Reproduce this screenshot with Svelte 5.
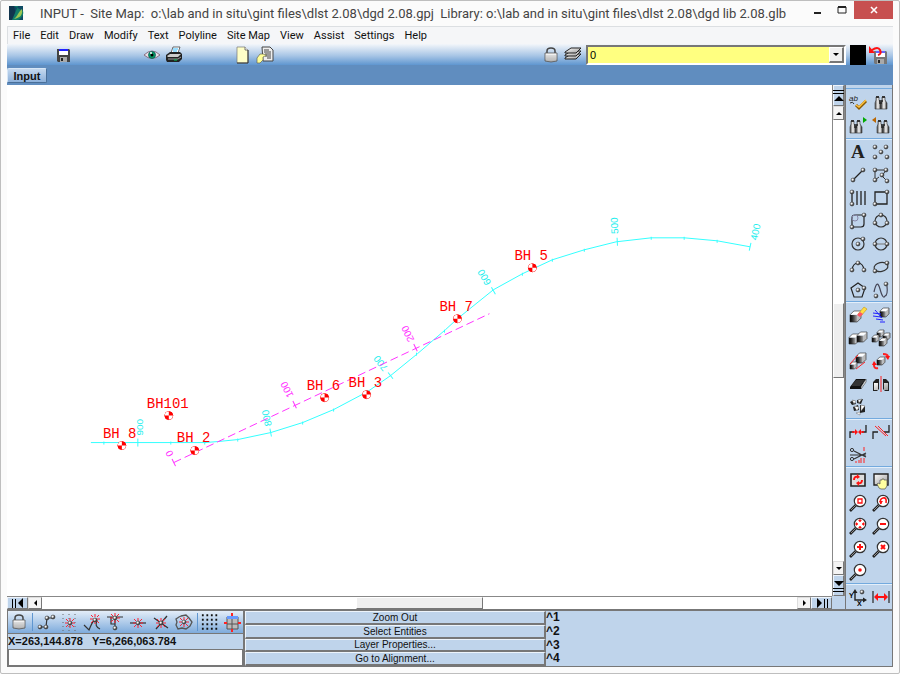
<script>
	const menus = ["File", "Edit", "Draw", "Modify", "Text", "Polyline", "Site Map", "View", "Assist", "Settings", "Help"];
	const commands = ["Zoom Out", "Select Entities", "Layer Properties...", "Go to Alignment..."];

	const paletteGroups = [
		["spell", "find", "findNext", "findPrev"],
		["text", "points", "line", "polyline", "hatch", "rect", "roundRect", "circle3", "circle", "circle2", "arc", "ellipse", "polygon", "spline"],
		["erase", "move", "copy", "array", "scale", "rotate", "skew", "mirror", "explode"],
		["join", "offset", "trim"],
		["redraw", "pan", "zoomWindow", "zoomPrev", "zoomExtents", "zoomOut", "zoomIn", "zoomClear", "zoomCenter"],
		["axes", "distance"]
	];
	const snaps = ["snapEnd", "snapGrid", "snapNear", "snapPerp", "snapMid", "snapCross", "snapArea"];

	// main alignment, chainage 400 (right) to 900 (left)
	const alignment = "90,443 204,443 217,442 237,440 270,433 302,423 333,410 367,392 390,376 417,354 445,330 457,319 493,290 522,274 552,260 584,250 616,242 651,238 684,238 717,241 750,247";
	const minorTicks = [[103, 443], [170, 443], [204, 443], [237, 440], [302, 423], [333, 410], [367, 392], [416, 354], [444, 331], [522, 274], [552, 260], [584, 250], [651, 238], [684, 238], [717, 241]];
	const stations = [
		{ label: "400", x: 750, y: 247, tx: 757, ty: 241, angle: -78 },
		{ label: "500", x: 617, y: 242, tx: 618, ty: 234, angle: -93 },
		{ label: "600", x: 493, y: 291, tx: 491, ty: 283, angle: -120 },
		{ label: "700", x: 390, y: 376, tx: 388, ty: 368, angle: -128 },
		{ label: "800", x: 270, y: 433, tx: 271, ty: 426, angle: -101 },
		{ label: "900", x: 137, y: 443, tx: 142, ty: 436, angle: -90 }
	];
	const crossStations = [
		{ label: "0", x: 173, y: 463, tx: 173, ty: 455, angle: -116 },
		{ label: "100", x: 294, y: 405, tx: 293, ty: 396, angle: -116 },
		{ label: "200", x: 415, y: 348, tx: 414, ty: 340, angle: -116 }
	];
	const boreholes = [
		{ name: "BH 8", x: 121, y: 446, tx: 102, ty: 438 },
		{ name: "BH101", x: 168, y: 416, tx: 146, ty: 408 },
		{ name: "BH 2", x: 194, y: 451, tx: 176, ty: 442 },
		{ name: "BH 6", x: 324, y: 398, tx: 306, ty: 390 },
		{ name: "BH 3", x: 366, y: 395, tx: 348, ty: 387 },
		{ name: "BH 7", x: 457, y: 319, tx: 439, ty: 311 },
		{ name: "BH 5", x: 532, y: 268, tx: 514, ty: 260 }
	];

	// small pieces that many icons share
	const ball = (x, y) => `<circle cx="${x}" cy="${y}" r="2" fill="url(#ball)" stroke="#444" stroke-width=".6"/>`;
	const balls = (...points) => points.map(([x, y]) => ball(x, y)).join("");
	const cube = (x, y, s) => {
		const top = s * 0.35;
		const side = s * 0.65;
		return `<path d="M${x} ${y + top}h${side}v${side}h${-side}z" fill="url(#cube)"/><path d="M${x + side} ${y + top}l${top} ${-top}v${side}l${-top} ${top}z" fill="#bbb"/><path d="M${x} ${y + top}l${top} ${-top}h${side}l${-top} ${top}z" fill="#fff"/><path d="M${x} ${y + top}l${top} ${-top}h${side}v${side}l${-top} ${top}h${-side}z" fill="none" stroke="#222" stroke-width=".6"/>`;
	};
	const stroke = (d, color = "#333", width = 1) => `<path d="${d}" fill="none" stroke="${color}" stroke-width="${width}"/>`;
	const barrel = (x) => `<path d="M${x + 1} 4h3v3l2 3v6h-6v-6l1-3z" fill="url(#barrel)" stroke="#333" stroke-width=".6"/><path d="M${x + 1} 3h3v2h-3z" fill="#333"/>`;
	const binoculars = barrel(3) + barrel(9) + stroke("M7 8h4M7 10h3", "#222", 1.5);
	const lens = (inner) => `<path d="M1 17l6-6" stroke="#222" stroke-width="2.6"/><path d="M2 16l5-5" stroke="#aaa" stroke-width=".8"/><circle cx="11" cy="7" r="5.7" fill="#fff" stroke="#333" stroke-width="1.2"/>${inner}`;
	const burst = (x, y) => stroke(`M${x - 5} ${y}h3M${x + 2} ${y}h3M${x} ${y - 5}v3M${x} ${y + 2}v3M${x - 4} ${y - 4}l2 2M${x + 2} ${y + 2}l2 2M${x + 4} ${y - 4}l-2 2M${x - 2} ${y + 2}l-2 2`, "#f23", 1);
	const floppy = (shell, label) => `<path d="M3 3h12l1 1v12H4l-1-1z" fill="${shell}"/><path d="M5 3h9v6H5z" fill="#fff"/><path d="M5 3h9v2H5z" fill="${label}"/><path d="M6 11h7v5H6z" fill="#aaa"/><path d="M7 12h2v3H7z" fill="#222"/>`;
	const paper = (x) => `<path d="M${x} 1h8l3 3v13h-11z" fill="#ffffc8" stroke="#777" stroke-width=".7"/><path d="M${x + 8} 1v3h3" fill="#fff" stroke="#555" stroke-width=".8"/><path d="M${x} 17h11V4" fill="none" stroke="#333"/>`;
	const hand = `<path d="M6 16l-2-4 1-1 2 1V8h2v-1h2v1h3v6l-2 3H8z" fill="#ffffa0" stroke="#555" stroke-width=".7"/>`;

	const icons = {
		logo: `<rect x="2" y="2" width="14" height="14" fill="#0e4b64"/><path d="M2 2h5l3 14H2z" fill="#12354e"/><path d="M7 2h4L5 16h6c4-2 6-6 5-9z" fill="#117d68"/><path d="M15 5c1 6-2 9-8 10 4-3 4-7 8-10z" fill="#9cc653"/>`,
		save: floppy("#444", "#22f"),
		eye: `<path d="M1 9Q9 1 17 9 9 16 1 9z" fill="#e8e0e8" stroke="#886f82"/><circle cx="9" cy="9" r="3.500" fill="#0a9b65" stroke="#055" stroke-width=".7"/><circle cx="9" cy="9" r="1.500"/><circle cx="8" cy="7" r="1" fill="#fff"/>`,
		print: `<path d="M6 7l2-6h7l-2 6z" fill="#fff" stroke="#333" stroke-width=".7"/><path d="M8 3h5M8 5h4" stroke="#3bf"/><path d="M1 9l4-3h10l2 2v5l-3 3H2l-1-2z" fill="#222"/><path d="M2 10l3-2h11l-3 3H3z" fill="#ccc"/><path d="M3 13h10l3-2" fill="none" stroke="#999"/><path d="M9 14h3" stroke="#0c5"/>`,
		page: paper(3),
		pageHand: `<path d="M6 1h8l3 3v11H7z" fill="#eee" stroke="#444"/><path d="M8 4h5M8 6h7M9 8h6M9 10h6M11 12h4" stroke="#444"/><path d="M1 17V12l3-4h3l4 1-4 2v3l-3 3z" fill="#ff9" stroke="#665" stroke-width=".7"/>`,
		lock: `<path d="M5 8V5q0-3 4-3t4 3v3" fill="none" stroke="#444" stroke-width="1.5"/><path d="M3 7h12v8q-6 2-12 0V7z" fill="url(#lock)" stroke="#555" stroke-width=".8"/><path d="M3 10h12M3 12h12" stroke="#bbb" stroke-width=".6"/>`,
		layers: ["12", "9", "6"].map((y) => `<path d="M1 ${y}l6-4h10l-5 5H1z" fill="url(#metal)" stroke="#222"/>`).join(""),
		undoSave: `<g transform="translate(2 2)">${floppy("#777", "#66f")}</g><path d="M3 4q6-4 8 0t-2 5" fill="none" stroke="#f11" stroke-width="2"/><path d="M0 0v7h6z" fill="#f11"/>`,

		spell: `<text x="0" y="8" font-family="Liberation Sans" font-size="8" font-style="italic" fill="#222">ab</text>` + stroke("M5 11q-1-3-4-1") + `<path d="M7 12l3 3 7-7" fill="none" stroke="#8a5a00" stroke-width="3"/><path d="M7 12l3 2 7-7" fill="none" stroke="#ffc23d" stroke-width="1.5"/>`,
		find: binoculars,
		findNext: `<g transform="translate(-2 1)">${binoculars}</g><path d="M14 1v6l4-3z" fill="#0a0"/>`,
		findPrev: `<g transform="translate(2 1)">${binoculars}</g><path d="M4 1v6L0 4z" fill="#b60"/>`,
		text: `<text x="2" y="15" font-family="Liberation Serif" font-size="19" font-weight="bold" fill="#222">A</text>`,
		points: balls([3, 4], [14, 4], [9, 9], [3, 14], [15, 14]),
		line: stroke("M4 14L14 4", "#222", 1.3) + balls([4, 14], [14, 4]),
		polyline: stroke("M3 4h11l-4 6 5 5M3 4v10l4-3") + balls([3, 4], [14, 4], [10, 9], [3, 14], [15, 15]),
		hatch: stroke("M3 3v12M8 2v14M12 2v14M16 2v14", "#222", 1.3) + balls([3, 3], [3, 15]),
		rect: stroke("M3 3h12v12H3z", "#222", 1.3) + balls([15, 3], [3, 15]),
		roundRect: stroke("M6 3h9v9q0 3-3 3H3V6q0-3 3-3z", "#222", 1.2) + `<circle cx="6" cy="6" r="3" fill="none" stroke="#88a"/>` + balls([15, 3], [3, 15]),
		circle3: `<circle cx="9" cy="9" r="6" fill="none" stroke="#333" stroke-width="1.2"/>` + balls([9, 3], [3, 11], [15, 11]),
		circle: `<circle cx="9" cy="9" r="6" fill="none" stroke="#333" stroke-width="1.2"/>` + balls([9, 9], [14, 4]),
		circle2: `<circle cx="9" cy="9" r="6" fill="none" stroke="#333" stroke-width="1.2"/>` + stroke("M3 9h12", "#777") + balls([3, 9], [15, 9]),
		arc: stroke("M3 12q1-7 6-7t6 7", "#222", 1.2) + balls([3, 12], [9, 5], [15, 12]),
		ellipse: `<ellipse cx="9" cy="9" rx="7" ry="4.500" fill="none" stroke="#333" stroke-width="1.2" transform="rotate(-12 9 9)"/>` + balls([3, 13], [15, 5]),
		polygon: stroke("M9 2l7 5-3 9H5L2 7z", "#222", 1.2) + balls([9, 9], [15, 7]),
		spline: stroke("M2 11Q5-3 8 8t5 7q3-1 2-10", "#445", 1.2) + balls([14, 3], [4, 15]),
		erase: cube(1, 5, 11) + `<path d="M9 8l6-7 3 2-6 7z" fill="#fd4" stroke="#b80" stroke-width=".5"/><path d="M8 9l3-3 3 2-3 3z" fill="#f56"/>`,
		move: cube(8, 2, 9) + stroke("M1 7l8 1M1 10l8 1M4 13l7 1M8 16h5", "#22f", 1) + stroke("M3 4l7 8", "#22f", 1),
		copy: cube(0, 5, 10) + cube(8, 3, 10),
		array: cube(5, 1, 7) + cube(11, 4, 7) + cube(0, 6, 7) + cube(7, 9, 8),
		scale: cube(7, 1, 10) + cube(1, 10, 7) + stroke("M1 12L9 3M7 17l9-7", "#f22", 1),
		rotate: cube(5, 5, 8) + stroke("M11 2q5 0 5 3M6 16q-4 1-4-3", "#f22", 2) + `<path d="M13 4h5l-2 4zM0 13h5l-3-4z" fill="#f11"/>`,
		skew: `<path d="M1 12l6-8h10l-5 8v2H1z" fill="#111"/><path d="M2 11l5-6h9l-5 6z" fill="#333"/><path d="M12 12l5-8v3l-5 7z" fill="#eee" stroke="#222" stroke-width=".5"/>`,
		mirror: `<path d="M1 7l3-3h3v10l-2 2H1zM17 7l-3-3h-3v10l2 2h4z" fill="#222"/><path d="M2 8h4v7H2zM12 8h4v7h-4z" fill="url(#metal)"/>` + stroke("M9 1v16", "#f22", 1),
		explode: `<path d="M1 4l4-2 2 4-4 1zM8 2l6-1-2 5-4-1zM4 9l5-2 1 5-5 1zM11 7l5 1v6l-5 1z" fill="#222"/><path d="M3 2l4 1-2 3zM9 2l4-1-3 4zM5 8l5 1-2 4zM12 7l4 1-4 5zM7 15l4-1v3z" fill="#fff" stroke="#555" stroke-width=".4"/>`,
		join: stroke("M1 15V9h4M17 2v7h-4", "#222", 1.3) + stroke("M3 9h4M11 9h4", "#f11", 1.5) + `<path d="M6 6v6l3-3zM12 6v6L9 9z" fill="#f11"/>`,
		offset: stroke("M1 16V9h5M12 9h5V2", "#222", 1.3) + stroke("M3 3l11 10M6 3l10 10", "#f22", 1),
		trim: stroke("M5 5l12 6M5 13l12-6M1 9h16", "#333", 1.2) + `<circle cx="3" cy="4" r="1.6" fill="none" stroke="#333"/><circle cx="3" cy="13" r="1.6" fill="none" stroke="#333"/>` + stroke("M7 15v2M10 14v3M12 12v5M15 1v4M15 12v5", "#f22", 1),
		redraw: `<path d="M2 3h14v12H2z" fill="#ddd" stroke="#222" stroke-width="1.6"/>` + stroke("M5 9q0-4 4-3M13 9q0 4-4 3", "#f11", 2) + `<path d="M8 3v5l3-2zM10 10v5l-3-3z" fill="#f11"/>`,
		pan: `<path d="M2 3h14v11H2z" fill="url(#metal)" stroke="#222" stroke-width="1.4"/><g transform="translate(1 1)">${hand}</g>`,
		zoomWindow: lens(stroke("M9 5h4v4H9z", "#f11", 1.3)),
		zoomPrev: lens(stroke("M9 10q-2-5 2-6t3 5", "#f11", 1.6) + `<path d="M7 7h4l-2 3z" fill="#f11"/>`),
		zoomExtents: lens(`<path d="M11 2l2 2H9zM11 12l2-2H9zM6 7l2-2v4zM16 7l-2-2v4z" fill="#f11"/>` + stroke("M11 3v2M11 9v2M7 7h2M13 7h2", "#f11", 1.5)),
		zoomOut: lens(stroke("M8 7h6", "#f11", 2)),
		zoomIn: lens(stroke("M8 7h6M11 4v6", "#f11", 2)),
		zoomClear: lens(stroke("M9 5l4 4M13 5l-4 4", "#f11", 2)),
		zoomCenter: lens(`<circle cx="11" cy="7" r="1.800" fill="#f11"/>`),
		axes: stroke("M6 4v8h10", "#222", 1.4) + `<path d="M3.500 5L6 1l2.500 4zM14 9.500l4 2.500-4 2.500z" fill="#222"/><text x="0" y="10" font-family="Liberation Sans" font-size="7" font-weight="bold">Y</text><text x="8" y="18" font-family="Liberation Sans" font-size="7" font-weight="bold">X</text>` + ball(13, 4),
		distance: stroke("M1 3v12M17 3v12", "#333", 1.3) + stroke("M4 9h10", "#f11", 2) + `<path d="M2 9l4-4v8zM16 9l-4-4v8z" fill="#f11"/>`,

		snapEnd: stroke("M3 14h6l1-9h5", "#333", 1.2) + balls([3, 14], [9, 14], [10, 5], [16, 4]),
		snapGrid: `<path d="M3 1v17M9 1v17M15 1v17" stroke="#666" stroke-dasharray="1 3"/>` + burst(10, 10) + ball(10, 10),
		snapNear: stroke("M1 12l5 5q6-15 8-9-3 5 3 8", "#333", 1.2) + burst(12, 6) + ball(12, 7),
		snapPerp: stroke("M1 4h16M9 4v10M5 4v7h4", "#333", 1.2) + burst(9, 5) + balls([9, 5], [9, 15]),
		snapMid: stroke("M1 10h16", "#333", 1.2) + burst(9, 10) + ball(9, 10),
		snapCross: stroke("M2 5l14 10M15 3L4 16", "#333", 1.3) + burst(9, 10) + ball(9, 10),
		snapArea: stroke("M6 3l5-1 3 3 3 4-2 4-4 3-4-1-4 1-2-4 1-3-1-3 3-2z", "#555", 1.3) + burst(9, 9) + ball(9, 9),
		dots: `<path d="M1 2.500h19M1 7.500h19M1 12.500h19M1 17.500h19" stroke="#111" stroke-width="2" stroke-dasharray="2 3"/>`,
		sheet: `<path d="M4 4h11v12H4z" fill="#bbb" stroke="#555"/><path d="M4 3h11v3H4z" fill="#69f"/><path d="M4 11h11M9 6v10" stroke="#555"/>` + stroke("M1 10h3M15 10h3M9 0v3M9 16v3", "#f22", 2)
	};
</script>

{#snippet icon(name, cls = "")}
	<svg class="icon {cls}" viewBox="0 0 18 18" aria-hidden="true">{@html icons[name]}</svg>
{/snippet}

{#snippet arrow(d)}
	<svg class="arrow" viewBox="0 0 12 12" aria-hidden="true"><path {d} /></svg>
{/snippet}

<svg class="defs" aria-hidden="true">
	<defs>
		<radialGradient id="ball" cx="35%" cy="35%">
			<stop offset="0" stop-color="#fff" />
			<stop offset=".5" stop-color="#ccc" />
			<stop offset="1" stop-color="#333" />
		</radialGradient>
		<linearGradient id="metal" x2="1" y2="1">
			<stop offset="0" stop-color="#fff" />
			<stop offset="1" stop-color="#999" />
		</linearGradient>
		<linearGradient id="cube" x2="1" y2="0">
			<stop offset="0" stop-color="#000" />
			<stop offset=".4" stop-color="#333" />
			<stop offset="1" stop-color="#aaa" />
		</linearGradient>
		<linearGradient id="barrel">
			<stop offset="0" stop-color="#444" />
			<stop offset=".5" stop-color="#fff" />
			<stop offset="1" stop-color="#222" />
		</linearGradient>
		<linearGradient id="lock" x2="0" y2="1">
			<stop offset="0" stop-color="#fff" />
			<stop offset="1" stop-color="#aaa" />
		</linearGradient>
	</defs>
</svg>

<div class="window">
	<header class="titleBar">
		{@render icon("logo", "logo")}
		<h1>INPUT -&nbsp; Site Map:&nbsp; o:\lab and in situ\gint files\dlst 2.08\dgd 2.08.gpj&nbsp; Library: o:\lab and in situ\gint files\dlst 2.08\dgd lib 2.08.glb</h1>
		<div class="windowButtons">
			<button aria-label="Minimize"><svg viewBox="0 0 10 10"><path d="M1 8h7" stroke="#222" stroke-width="2" /></svg></button>
			<button aria-label="Maximize"><svg viewBox="0 0 10 10"><path d="M1 2h8v6H1z" fill="none" stroke="#222" /><path d="M1 2h8" stroke="#222" stroke-width="2" /></svg></button>
			<button aria-label="Close" class="close"><svg viewBox="0 0 10 10"><path d="M2 2l6 6M8 2l-6 6" stroke="#fff" stroke-width="1.6" /></svg></button>
		</div>
	</header>

	<nav class="menuBar">
		{#each menus as menu}
			<button>{menu}</button>
		{/each}
	</nav>

	<div class="toolBar">
		<div class="toolGroup first"><button aria-label="Save">{@render icon("save")}</button></div>
		<div class="toolGroup second">
			<button aria-label="Preview">{@render icon("eye")}</button>
			<button aria-label="Print">{@render icon("print")}</button>
		</div>
		<div class="toolGroup third">
			<button aria-label="New">{@render icon("page")}</button>
			<button aria-label="Properties">{@render icon("pageHand")}</button>
		</div>
		<div class="toolGroup last">
			<button aria-label="Lock layer">{@render icon("lock")}</button>
			<button aria-label="Layers">{@render icon("layers")}</button>
		</div>
		<div class="combo">
			<select aria-label="Current layer"><option>0</option></select>
			<span class="comboArrow">{@render arrow("M3 5h6L6 8z")}</span>
		</div>
		<button class="swatch" aria-label="Layer color"></button>
		<button aria-label="Revert">{@render icon("undoSave")}</button>
	</div>

	<div class="tabs"><button class="tab">Input</button></div>

	<main>
		<svg class="map" viewBox="6 85 826 511" preserveAspectRatio="xMinYMin meet" role="img" aria-label="Site map">
			<g class="main">
				<polyline points={alignment} />
				{#each minorTicks as [x, y]}
					<path d="M{x} {y - 1}v3" />
				{/each}
				{#each stations as s}
					<path d="M-4 0h8" transform="translate({s.x} {s.y}) rotate({s.angle})" />
					<text transform="translate({s.tx} {s.ty}) rotate({s.angle})">{s.label}</text>
				{/each}
			</g>
			<g class="cross">
				<path class="dashed" d="M173 463L489 314" />
				{#each crossStations as s}
					<path d="M-4 0h8" transform="translate({s.x} {s.y}) rotate({s.angle})" />
					<text transform="translate({s.tx} {s.ty}) rotate({s.angle})">{s.label}</text>
				{/each}
			</g>
			{#each boreholes as b}
				<g class="borehole">
					<circle cx={b.x} cy={b.y} r="4" />
					<path d="M{b.x} {b.y}v-4a4 4 0 0 0-4 4zM{b.x} {b.y}v4a4 4 0 0 0 4-4z" />
					<text x={b.tx} y={b.ty}>{b.name}</text>
				</g>
			{/each}
		</svg>

		<div class="scroll vertical">
			<button class="jump" aria-label="Top">{@render arrow("M0 0h12v1H0zM0 3h12v1H0zM1 11h10L6 6z")}</button>
			<button class="step" aria-label="Up">{@render arrow("M3 8h6L6 5z")}</button>
			<div class="track"><span class="thumb"></span></div>
			<button class="step" aria-label="Down">{@render arrow("M3 5h6L6 8z")}</button>
			<button class="jump" aria-label="Bottom">{@render arrow("M1 1h10L6 6zM0 8h12v1H0zM0 11h12v1H0z")}</button>
		</div>
		<div class="scroll horizontal">
			<button class="jump" aria-label="Far left">{@render arrow("M0 2h1v9H0zM3 2h1v9H3zM11 1v10L6 6z")}</button>
			<button class="step" aria-label="Left">{@render arrow("M8 3v6L5 6z")}</button>
			<div class="track"><span class="thumb"></span></div>
			<button class="step" aria-label="Right">{@render arrow("M5 3v6l3-3z")}</button>
			<button class="jump" aria-label="Far right">{@render arrow("M1 1v10l5-5zM8 2h1v9H8zM11 2h1v9h-1z")}</button>
		</div>

		<aside class="palette">
			{#each paletteGroups as group}
				<div class="paletteGroup">
					{#each group as name}
						<button aria-label={name}>{@render icon(name)}</button>
					{/each}
				</div>
			{/each}
		</aside>
	</main>

	<footer>
		<div class="status">
			<div class="snapBar">
				<button class="snapLock" aria-label="Lock">{@render icon("lock")}</button>
				<div class="snaps">
					{#each snaps as name}
						<button aria-label={name}>{@render icon(name)}</button>
					{/each}
				</div>
				<button aria-label="Grid" class="gridButton"><svg class="icon" viewBox="0 0 20 20">{@html icons.dots}</svg></button>
				<button aria-label="Sheet">{@render icon("sheet")}</button>
			</div>
			<p class="coords">X=263,144.878   Y=6,266,063.784</p>
			<input type="text" aria-label="Command" />
		</div>
		<div class="commands">
			{#each commands as command}
				<button>{command}</button>
			{/each}
		</div>
		<div class="shortcuts">
			{#each commands as _, i}
				<span>^{i + 1}</span>
			{/each}
		</div>
	</footer>
</div>

<style>
	:global(body) {
		background: #fafafa;
	}

	.window {
		box-sizing: border-box;
		display: flex;
		flex-direction: column;
		height: 100vh;
		min-height: 640px;
		padding: 0 6px 6px;
		border: 1px solid #bebebe;
		border-radius: 2px;
		background: #fbfbfb;
		font-family: "Liberation Sans", Arial, sans-serif;
		font-size: 11px;
		color: #111;
	}

	button {
		display: flex;
		align-items: center;
		justify-content: center;
		box-sizing: border-box;
		padding: 0;
		border: 0;
		background: none;
		font: inherit;
		color: inherit;
	}

	.defs {
		position: absolute;
		width: 0;
		height: 0;
	}

	.icon {
		display: block;
		width: 18px;
		height: 18px;
		overflow: visible;
	}

	.arrow {
		display: block;
		flex: none;
		width: 12px;
		height: 12px;
	}

	/* title and menus */
	.titleBar {
		display: flex;
		height: 25px;
		flex: none;
	}

	.logo {
		flex: none;
		margin: 3px 15px 0 0;
	}

	h1 {
		flex: 1;
		min-width: 0;
		overflow: hidden;
		margin: 0;
		font-family: Roboto, "Noto Sans", sans-serif;
		font-size: 13px;
		font-weight: 400;
		line-height: 25px;
		white-space: nowrap;
		color: #444;
	}

	.windowButtons {
		display: flex;
		flex: none;
		align-items: flex-start;
	}

	.windowButtons button {
		width: 24px;
		height: 18px;
	}

	.windowButtons svg {
		width: 10px;
		height: 10px;
	}

	.windowButtons .close {
		width: 39px;
		background: #c75050;
	}

	.menuBar {
		display: flex;
		flex: none;
		gap: 10px;
		height: 18px;
		padding-left: 5px;
		border: 1px solid #dcdfe2;
		border-width: 1px 0 0 1px;
		box-sizing: border-box;
		background: #f5f6f8;
		font-family: Roboto, "Noto Sans", sans-serif;
	}

	/* tools */
	.toolBar {
		display: flex;
		align-items: center;
		flex: none;
		height: 21px;
		padding-right: 6px;
		background: linear-gradient(#f3f6fa, #a9c6e6 55%, #5f96d0);
	}

	.toolGroup {
		display: flex;
		gap: 4px;
	}

	.first {
		padding-left: 47px;
	}

	.second {
		padding-left: 71px;
	}

	.third {
		padding-left: 51px;
	}

	.last {
		margin-left: auto;
	}

	.combo {
		display: flex;
		flex: 0 1 260px;
		box-sizing: border-box;
		height: 20px;
		margin: 0 4px;
		border: 2px solid #fff;
		border-color: #777 #fff #fff #777;
		background: #ffff80;
	}

	select {
		flex: 1;
		appearance: none;
		border: 0;
		padding: 0 2px;
		outline: 0;
		background: #ffff80;
		font: inherit;
	}

	.comboArrow {
		border: 1px solid #fff;
		border-right: 2px solid #777;
		border-bottom: 2px solid #777;
		background: #f0f0f0;
	}

	.swatch {
		width: 16px;
		height: 20px;
		margin-right: 3px;
		background: #000;
	}

	.tabs {
		flex: none;
		height: 20px;
		padding-top: 3px;
		box-sizing: border-box;
		background: #608dbf;
	}

	.tab {
		width: 40px;
		height: 15px;
		border: 1px solid #d8e7f7;
		border-color: #d8e7f7 #4a6f98 #4a6f98 #d8e7f7;
		border-radius: 2px;
		background: linear-gradient(#c5d9ef, #8cb0da);
		font-weight: bold;
	}

	/* drawing area */
	main {
		display: grid;
		flex: 1;
		min-height: 0;
		grid-template-columns: 1fr 13px 48px;
		grid-template-rows: 1fr 13px;
		background: #bfd4eb;
	}

	.map {
		width: 100%;
		height: 100%;
		min-height: 0;
		background: #fff;
	}

	.main path,
	.main polyline {
		fill: none;
		stroke: #3ff;
	}

	.map text {
		font-size: 10px;
	}

	.main text {
		fill: #2ee;
	}

	.cross path {
		stroke: #f3f;
	}

	.cross text {
		fill: #f3f;
	}

	.cross .dashed {
		stroke-dasharray: 8 4;
	}

	.borehole circle {
		fill: #f00;
		stroke: #f00;
	}

	.borehole path {
		fill: #fff;
	}

	.map .borehole text {
		fill: #f00;
		font-family: "Liberation Mono", "Courier New", monospace;
		font-size: 14px;
	}

	.scroll {
		display: flex;
		overflow: hidden;
		border: 0 solid #888;
		background: #fff;
	}

	.vertical {
		flex-direction: column;
		border-width: 0 1px;
	}

	.horizontal {
		grid-row: 2;
		border-top-width: 1px;
	}

	.track {
		display: flex;
		flex: 1;
		flex-direction: inherit;
	}

	.track::before,
	.track::after {
		content: "";
		flex: 5;
	}

	.thumb {
		flex: 2;
		border: 1px solid #fff;
		border-right-color: #777;
		border-bottom-color: #777;
		background: #efefef;
	}

	.step {
		flex: 0 0 14px;
		border: 1px solid #ddd;
		border-right-color: #777;
		border-bottom-color: #777;
		background: #f4f4f4;
	}

	.jump {
		flex: 0 0 21px;
		border: 1px solid #eef4fb;
		border-right-color: #777;
		border-bottom-color: #777;
		background: #bfd4eb;
	}

	.palette {
		grid-column: 3;
		grid-row: 1 / 3;
		overflow: hidden;
		border: 1px solid #777;
		border-width: 0 1px 0 1px;
		background: #bfd4eb;
	}

	.paletteGroup {
		display: grid;
		grid-template-columns: 23px 23px;
		grid-auto-rows: 23px;
		border-bottom: 1px solid #73aade;
		border-top: 1px solid #e4effa;
	}

	.paletteGroup:first-child {
		margin-top: 3px;
		padding: 1px 0 2px;
		border-top-color: #73aade;
	}

	.paletteGroup:last-child {
		border-bottom: 0;
	}

	/* bottom panel */
	footer {
		display: grid;
		flex: none;
		grid-template-columns: 237px minmax(0, 301px) 1fr;
		height: 58px;
		box-sizing: border-box;
		border: 1px solid #777;
		border-top-width: 2px;
		background: #bfd4eb;
	}

	.status {
		display: flex;
		flex-direction: column;
		border-right: 2px solid #777;
	}

	.snapBar {
		display: flex;
		align-items: center;
		justify-content: space-between;
		height: 22px;
		padding: 0 2px;
		border-bottom: 1px solid #777;
		background: linear-gradient(#e3edf8, #7eabdc);
	}

	.snaps {
		display: flex;
		gap: 5px;
		padding: 0 4px;
		border: 1px solid #5f96d0;
		border-width: 0 1px;
	}

	.coords {
		margin: 0;
		font-weight: bold;
		line-height: 15px;
		white-space: pre;
	}

	input {
		flex: 1;
		min-height: 0;
		box-sizing: border-box;
		width: 100%;
		border: 1px solid #777;
		background: #fff;
		font: inherit;
	}

	.commands,
	.shortcuts {
		display: grid;
		grid-template-rows: repeat(4, 1fr);
		min-height: 0;
	}

	.commands button {
		min-height: 0;
		border: 1px solid #edf4fb;
		border-right: 2px solid #777;
		border-bottom: 2px solid #777;
		font-size: 10px;
	}

	.shortcuts {
		font-size: 12px;
		font-weight: bold;
		line-height: 13px;
	}
</style>
